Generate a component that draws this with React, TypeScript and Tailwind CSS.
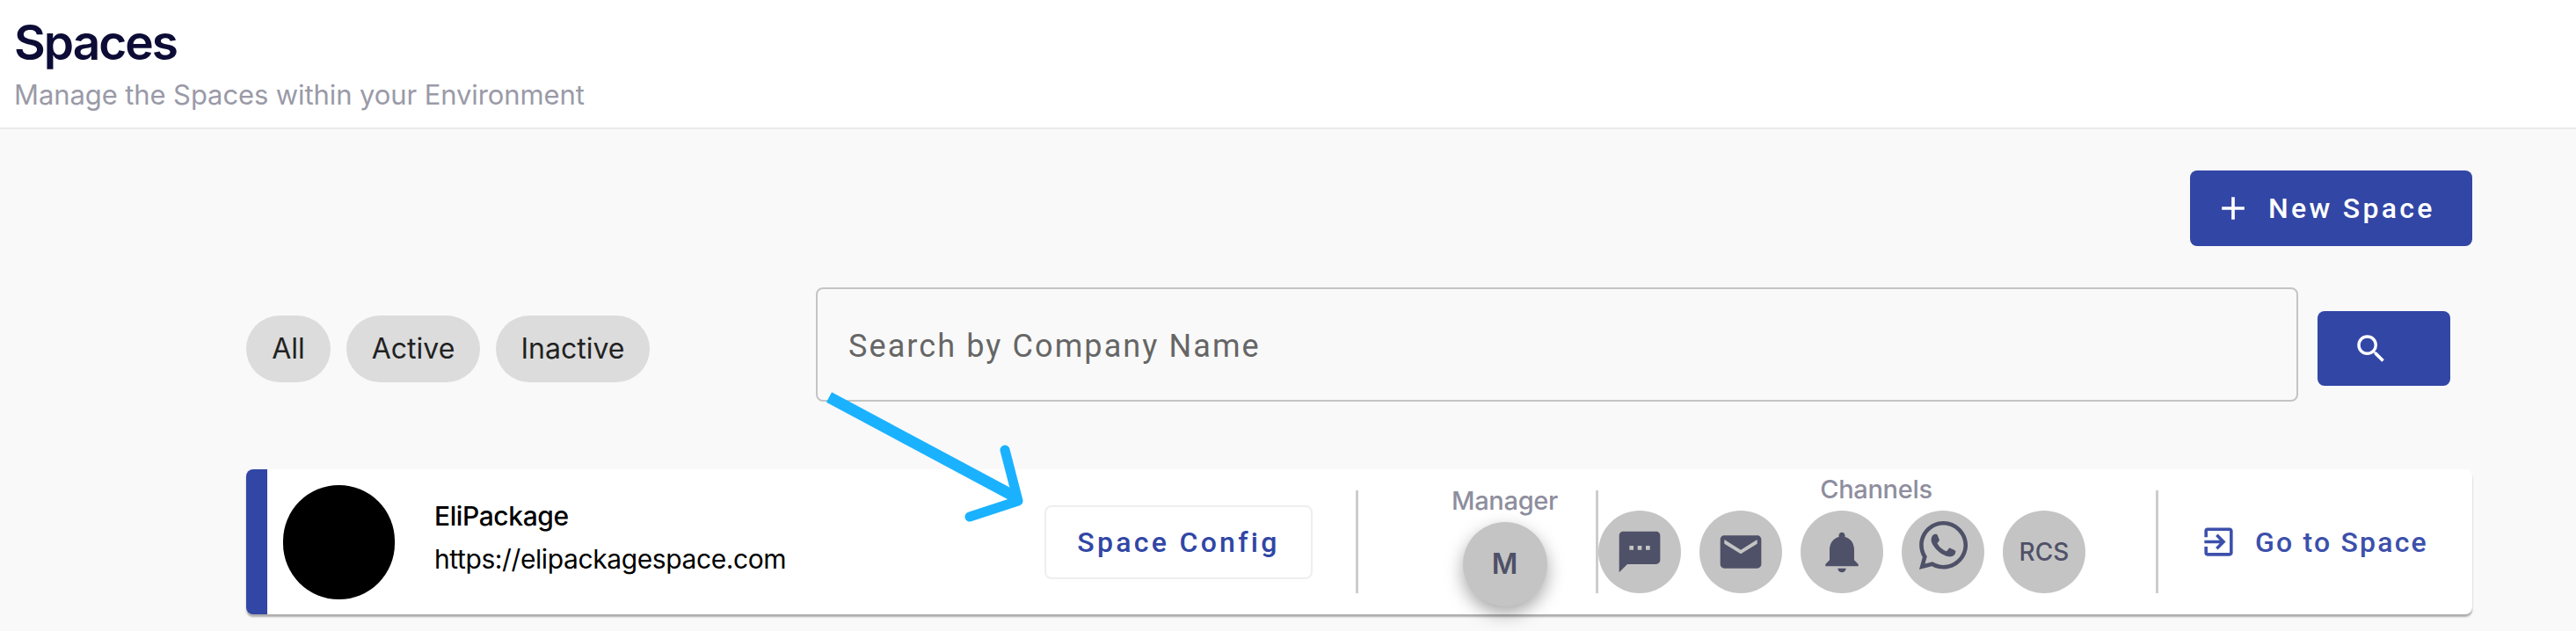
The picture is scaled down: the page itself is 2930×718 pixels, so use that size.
import { MdAdd, MdEmail, MdNotifications, MdOutlineExitToApp, MdSearch, MdSms } from "react-icons/md";
import { FaWhatsapp } from "react-icons/fa";

const filters = [
  { label: "All", width: "w-[96px]" },
  { label: "Active", width: "w-[152px]" },
  { label: "Inactive", width: "w-[175px]" },
];

function Divider() {
  return <div className="h-[117px] w-[3px] shrink-0 bg-[#cccccc]" />;
}

function ChannelCircle({ children }: { children: React.ReactNode }) {
  return (
    <div className="flex h-[94px] w-[94px] shrink-0 items-center justify-center rounded-full bg-[#c4c4c4] text-[#4f5168]">
      {children}
    </div>
  );
}

export default function App() {
  return (
    <div className="relative h-[718px] w-[2930px] overflow-hidden bg-[#f9f9f9] font-['Inter',sans-serif]">
      <header className="h-[147px] border-b-2 border-[#ebebeb] bg-white pl-[16px] pt-[18px]">
        <h1 className="text-[55px] leading-[60px] font-semibold tracking-[-2px] text-[#0c0c36]">Spaces</h1>
        <p className="mt-[11px] text-[31px] leading-[38px] tracking-[-0.1px] text-[#9a9aa8]">
          Manage the Spaces within your Environment
        </p>
      </header>

      <main className="pl-[280px] pr-[118px]">
        <div className="flex justify-end pt-[47px]">
          <button className="flex h-[86px] w-[321px] items-center rounded-[8px] bg-[#3146a5] pl-[27px] font-['Roboto',sans-serif] text-[32px] font-medium tracking-[3.3px] text-white">
            <MdAdd size={44} />
            <span className="ml-[18px]">New Space</span>
          </button>
        </div>

        <div className="mt-[47px] flex items-start">
          <div className="mt-[32px] flex gap-[18px]">
            {filters.map((f) => (
              <div
                key={f.label}
                className={`flex h-[76px] ${f.width} items-center justify-center rounded-full bg-[#dcdcdc] text-[32px] text-[#222222]`}
              >
                {f.label}
              </div>
            ))}
          </div>
          <div className="ml-[189px] flex h-[130px] w-[1686px] items-center rounded-[8px] border-2 border-[#c4c4c4] pl-[35px] pt-[3px] font-['Roboto',sans-serif] text-[36px] tracking-[2.1px] text-[#666666]">
            Search by Company Name
          </div>
          <button className="ml-[22px] mt-[27px] flex h-[85px] w-[151px] items-center rounded-[8px] bg-[#3146a5] pl-[40px] text-white">
            <MdSearch size={42} />
          </button>
        </div>

        <div className="mt-[77px] flex h-[165px] items-center rounded-[8px] border-l-[24px] border-[#3146a5] bg-white shadow-[0_3px_2px_rgba(0,0,0,0.3)]">
          <div className="ml-[18px] h-[130px] w-[127px] shrink-0 rounded-full bg-black" />
          <div className="mb-[10px] ml-[45px] w-[694px] shrink-0 text-[30px] text-black">
            <div className="font-medium leading-[34px] tracking-[-0.4px]">EliPackage</div>
            <div className="mt-[15px] leading-[34px] tracking-[-0.4px]">https://elipackagespace.com</div>
          </div>
          <button className="flex h-[84px] w-[305px] shrink-0 items-center justify-center rounded-[8px] border-2 border-[#eeeeee] font-['Roboto',sans-serif] text-[32px] font-medium tracking-[3.3px] text-[#3146a5]">
            Space Config
          </button>
          <div className="ml-[49px]">
            <Divider />
          </div>
          <div className="flex h-[130px] w-[270px] shrink-0 flex-col items-center pl-[63px]">
            <span className="mt-[2px] text-[29px] leading-[32px] font-medium tracking-[-0.3px] text-[#8e8e9e]">Manager</span>
            <div className="mt-[8px] flex h-[96px] w-[96px] shrink-0 items-center justify-center rounded-full bg-[#c4c4c4] text-[32px] font-semibold text-[#4f5168] shadow-[0_8px_20px_rgba(0,0,0,0.35)]">
              M
            </div>
          </div>
          <Divider />
          <div className="mb-[17px] flex shrink-0 flex-col items-center">
            <span className="mb-[8px] pl-[78px] text-[29px] leading-[32px] font-medium tracking-[-0.3px] text-[#8e8e9e]">Channels</span>
            <div className="flex gap-[21px]">
              <ChannelCircle><MdSms size={56} /></ChannelCircle>
              <ChannelCircle><MdEmail size={56} /></ChannelCircle>
              <ChannelCircle><MdNotifications size={56} /></ChannelCircle>
              <ChannelCircle><FaWhatsapp size={63} className="mb-[16px]" /></ChannelCircle>
              <ChannelCircle><span className="text-[28px] font-medium">RCS</span></ChannelCircle>
            </div>
          </div>
          <div className="ml-[80px]">
            <Divider />
          </div>
          <div className="ml-[47px] flex items-center font-['Roboto',sans-serif] text-[32px] font-medium tracking-[2.2px] text-[#3c50ab]">
            <MdOutlineExitToApp size={43} />
            <span className="ml-[20px]">Go to Space</span>
          </div>
        </div>
      </main>

      <svg className="absolute left-[930px] top-[440px]" width="250" height="170" viewBox="930 440 250 170" fill="none">
        <path d="M943 452 L1156 566" stroke="#1ab2ff" strokeWidth="13" />
        <path d="M1143 512 L1158 570 L1103 588" stroke="#1ab2ff" strokeWidth="11" strokeLinecap="round" strokeLinejoin="round" />
      </svg>
    </div>
  );
}
